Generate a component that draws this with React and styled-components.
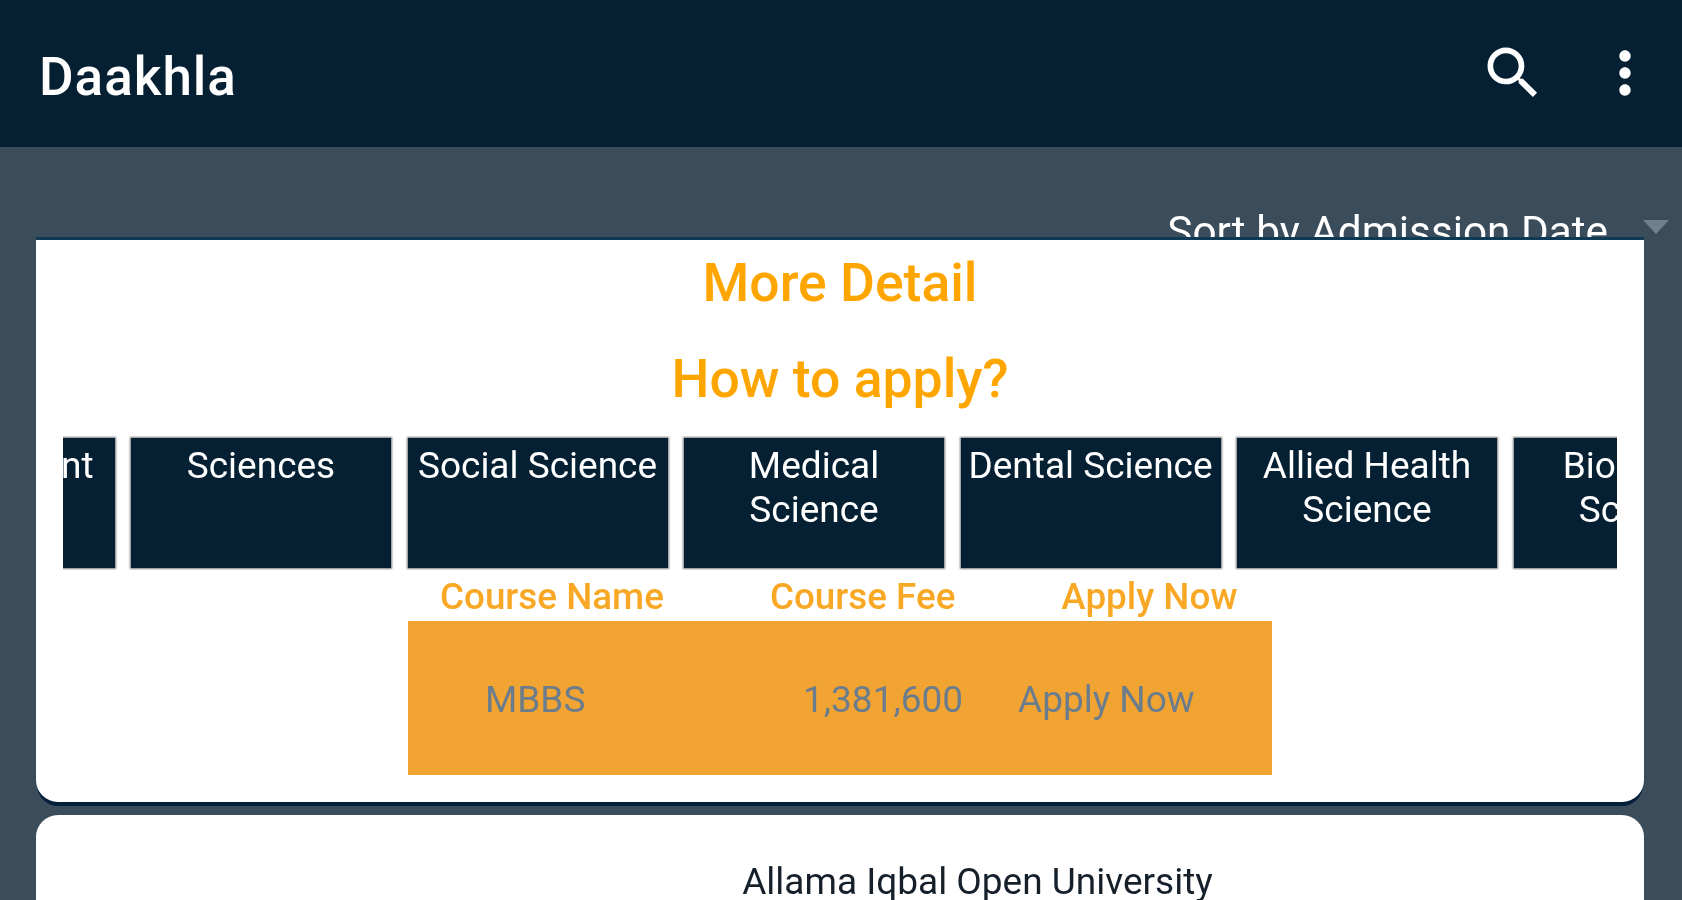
import React from "react";
import styled, { createGlobalStyle } from "styled-components";
import { MdSearch, MdMoreVert } from "react-icons/md";

const Global = createGlobalStyle`
  html, body { margin: 0; padding: 0; height: 100%; overflow: hidden; background: #3b4c5a; }
  body { font-family: Roboto, "Liberation Sans", sans-serif; }
`;

const Screen = styled.div`
  height: 900px;
  overflow: hidden;
  display: flex;
  flex-direction: column;
  background: #3b4c5a;
  filter: blur(0.7px);
`;

const AppBar = styled.header`
  flex: none;
  height: 147px;
  background: #052033;
  color: #fff;
  display: flex;
  align-items: center;
  padding: 0 23px 0 39px;
`;

const Title = styled.h1`
  flex: 1;
  margin: 0;
  padding-top: 6px;
  font-size: 53px;
  font-weight: 500;
  letter-spacing: 1px;
`;

const IconGroup = styled.div`
  display: flex;
  gap: 44px;
  padding-bottom: 2px;
  font-size: 68px;
  line-height: 0;
`;

const SortRow = styled.div`
  flex: none;
  height: 93px;
  display: flex;
  justify-content: flex-end;
  align-items: flex-end;
  padding-right: 13px;
  color: #fff;
`;

const SortLabel = styled.span`
  font-size: 42.3px;
  line-height: 44px;
  margin-bottom: -14px;
`;

const SortArrow = styled.span`
  width: 0;
  height: 0;
  margin: 0 0 6px 35px;
  border-left: 13px solid transparent;
  border-right: 13px solid transparent;
  border-top: 14px solid #70808d;
`;

const DetailCard = styled.section`
  position: relative;
  flex: none;
  margin: 0 38px 13px 36px;
  padding: 0 25px 27px;
  background: #fff;
  border-radius: 0 0 22px 22px;
  box-shadow: 0 -3px 0 #0e3a55, 0 5px 0 -1px #05203a;
`;

const UniversityCard = styled.section`
  position: relative;
  flex: 1;
  margin: 0 38px 0 36px;
  padding: 45px 0 0 275px;
  background: #fff;
  border-radius: 22px 22px 0 0;
  text-align: center;
`;

const LinkHeading = styled.h2`
  margin: 0 0 10px;
  text-align: center;
  color: #ffa500;
  font-size: 53.5px;
  font-weight: 500;
  line-height: 86px;
`;

const TabStrip = styled.div`
  margin: 14px 2px 0;
  overflow: hidden;
  padding: 2px 0;
`;

const TabTrack = styled.div`
  display: flex;
  gap: 16.5px;
  margin-left: -208.5px;
`;

const Tab = styled.div`
  flex: none;
  width: 260px;
  height: 130px;
  box-sizing: border-box;
  padding: 6px 2px 4px;
  background: #052033;
  color: #fff;
  font-size: 37px;
  line-height: 44px;
  text-align: center;
  box-shadow: 0 0 2px 1px rgba(30, 30, 30, .6);
`;

const CourseTable = styled.div`
  margin-left: 347px;
  width: 864px;
`;

const HeadRow = styled.div`
  display: flex;
  gap: 106px;
  padding: 2px 0 0 32px;
  box-sizing: border-box;
  height: 51px;
  align-items: center;
  color: #f9a825;
  font-size: 36.8px;
  font-weight: 500;
`;

const BodyRow = styled.div`
  display: grid;
  grid-template-columns: 318px 215px auto;
  align-items: center;
  height: 154px;
  box-sizing: border-box;
  padding: 2px 0 0 77px;
  background: #f2a433;
  color: #6b7d8c;
  font-size: 37px;
`;

const University = styled.div`
  color: #15202b;
  font-size: 37px;
  line-height: 44px;
`;

const tabs = [
  "Management",
  "Sciences",
  "Social Science",
  "Medical Science",
  "Dental Science",
  "Allied Health Science",
  "Biological Science",
];

export default function App() {
  return (
    <Screen>
      <Global />
      <AppBar>
        <Title>Daakhla</Title>
        <IconGroup>
          <MdSearch />
          <MdMoreVert />
        </IconGroup>
      </AppBar>
      <SortRow>
        <SortLabel>Sort by Admission Date</SortLabel>
        <SortArrow />
      </SortRow>
      <DetailCard>
        <LinkHeading>More Detail</LinkHeading>
        <LinkHeading>How to apply?</LinkHeading>
        <TabStrip>
          <TabTrack>
            {tabs.map((t) => (
              <Tab key={t}>{t}</Tab>
            ))}
          </TabTrack>
        </TabStrip>
        <CourseTable>
          <HeadRow>
            <span>Course Name</span>
            <span>Course Fee</span>
            <span>Apply Now</span>
          </HeadRow>
          <BodyRow>
            <span>MBBS</span>
            <span>1,381,600</span>
            <span>Apply Now</span>
          </BodyRow>
        </CourseTable>
      </DetailCard>
      <UniversityCard>
        <University>Allama Iqbal Open University</University>
      </UniversityCard>
    </Screen>
  );
}
